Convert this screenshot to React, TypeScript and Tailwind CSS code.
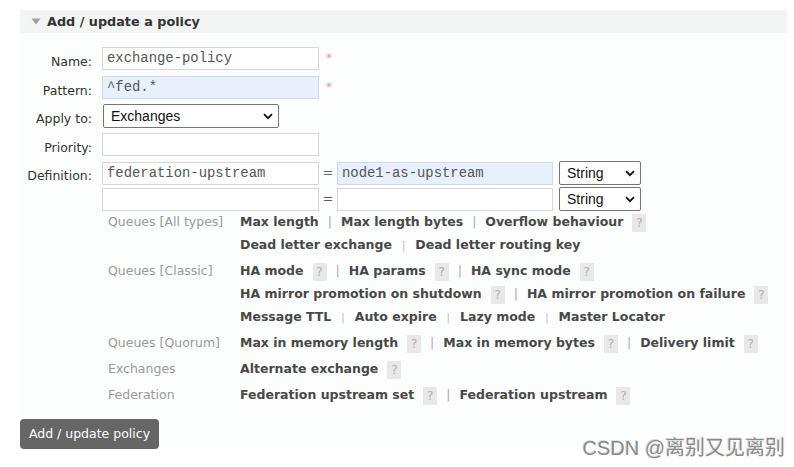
import React from "react";

const L = ({ t }: { t: string }) => (
  <span className="font-bold text-[#484848] whitespace-nowrap">{t}</span>
);
const Q = () => (
  <span className="inline-block w-[14px] h-[18px] bg-[#e8e8e8] text-[#b0b0b0] text-center leading-[18px] ml-[9px] align-middle font-normal text-[12px]">
    ?
  </span>
);
const S = ({ small }: { small?: boolean }) => (
  <span className={small ? "mx-[10px] text-[#bbb] text-[10px] align-middle" : "mx-[9px] text-[#aaa] font-normal"}>|</span>
);

const Chevron = () => (
  <svg width="10" height="7" viewBox="0 0 10 7" className="shrink-0">
    <path d="M1 1.2 L5 5.2 L9 1.2" fill="none" stroke="#111" strokeWidth="1.8" />
  </svg>
);

const Select = ({ text, w }: { text: string; w: string }) => (
  <div
    className={`${w} h-[24px] border border-[#767676] rounded-[2px] bg-white flex items-center justify-between pl-[7px] pr-[5px] font-['Liberation_Sans',sans-serif] text-[14px] text-[#111]`}
  >
    <span>{text}</span>
    <Chevron />
  </div>
);

const Input = ({ value, blue, w = "w-[217px]", h = "h-[23px]" }: { value?: string; blue?: boolean; w?: string; h?: string }) => (
  <div
    className={`${w} ${h} border ${blue ? "bg-[#e8f0fe] border-[#cfd9ea]" : "bg-white border-[#d6d6d6]"} flex items-center pl-[4px] font-['Liberation_Mono',monospace] text-[13.9px] text-[#555]`}
  >
    {value}
  </div>
);

const Label = ({ t }: { t: string }) => (
  <div className="w-[72px] text-right pt-[6px] leading-[16px] mr-[10px] text-[#333] text-[12.5px] shrink-0">{t}</div>
);

const Star = () => <span className="ml-[7px] text-[#e89aa0] text-[12px] leading-[16px] self-start mt-[3px]">*</span>;

const Group = ({ label, children }: { label: string; children: React.ReactNode }) => (
  <div className="flex">
    <div className="w-[132px] shrink-0 text-[#9a9a9a] leading-[22px] whitespace-nowrap">{label}</div>
    <div className="flex flex-col">{children}</div>
  </div>
);

const Line = ({ children }: { children: React.ReactNode }) => (
  <div className="h-[23px] flex items-center whitespace-nowrap">{children}</div>
);

export default function App() {
  return (
    <div className="w-[794px] h-[467px] bg-white relative overflow-hidden font-['DejaVu_Sans',sans-serif] text-[12.5px]">
      <div className="pt-[10px] pl-[20px] pr-[7px]">
        <div className="h-[23px] bg-[#f3f5f4] flex items-center pl-[11px] gap-[6px]">
          <svg width="10" height="7" viewBox="0 0 10 7">
            <path d="M0.5 0.5 L9.5 0.5 L5 6.5 Z" fill="#a0a0a0" />
          </svg>
          <span className="font-bold text-[12.8px] text-[#333]">Add / update a policy</span>
        </div>
        <div className="bg-[#fcfdfd] pb-[1px]">
          <div className="pt-[14px] flex items-center">
            <Label t="Name:" />
            <Input value="exchange-policy" />
            <Star />
          </div>
          <div className="mt-[6px] flex items-center">
            <Label t="Pattern:" />
            <Input value="^fed.*" blue />
            <Star />
          </div>
          <div className="mt-[5px] flex items-center">
            <Label t="Apply to:" />
            <div className="ml-[1px]">
              <Select text="Exchanges" w="w-[176px]" />
            </div>
          </div>
          <div className="mt-[5px] flex items-center">
            <Label t="Priority:" />
            <Input h="h-[23px]" />
          </div>
          <div className="mt-[5px] flex items-center">
            <Label t="Definition:" />
            <Input value="federation-upstream" />
            <div className="w-[18px] text-center text-[#666] text-[13px]">=</div>
            <Input value="node1-as-upstream" blue w="w-[216px]" />
            <div className="ml-[6px]">
              <Select text="String" w="w-[82px]" />
            </div>
          </div>
          <div className="mt-[2px] flex items-center">
            <div className="w-[82px] shrink-0" />
            <Input />
            <div className="w-[18px] text-center text-[#666] text-[13px]">=</div>
            <Input w="w-[216px]" />
            <div className="ml-[6px]">
              <Select text="String" w="w-[82px]" />
            </div>
          </div>

          <div className="mt-[0px] pl-[88px] flex flex-col gap-[3px]">
            <Group label="Queues [All types]">
              <Line>
                <L t="Max length" />
                <S />
                <L t="Max length bytes" />
                <S />
                <L t="Overflow behaviour" />
                <Q />
              </Line>
              <Line>
                <L t="Dead letter exchange" />
                <S small />
                <L t="Dead letter routing key" />
              </Line>
            </Group>
            <Group label="Queues [Classic]">
              <Line>
                <L t="HA mode" />
                <Q />
                <S />
                <L t="HA params" />
                <Q />
                <S />
                <L t="HA sync mode" />
                <Q />
              </Line>
              <Line>
                <L t="HA mirror promotion on shutdown" />
                <Q />
                <S />
                <L t="HA mirror promotion on failure" />
                <Q />
              </Line>
              <Line>
                <L t="Message TTL" />
                <S small />
                <L t="Auto expire" />
                <S small />
                <L t="Lazy mode" />
                <S small />
                <L t="Master Locator" />
              </Line>
            </Group>
            <Group label="Queues [Quorum]">
              <Line>
                <L t="Max in memory length" />
                <Q />
                <S />
                <L t="Max in memory bytes" />
                <Q />
                <S />
                <L t="Delivery limit" />
                <Q />
              </Line>
            </Group>
            <Group label="Exchanges">
              <Line>
                <L t="Alternate exchange" />
                <Q />
              </Line>
            </Group>
            <Group label="Federation">
              <Line>
                <L t="Federation upstream set" />
                <Q />
                <S />
                <L t="Federation upstream" />
                <Q />
              </Line>
            </Group>
          </div>

          <div className="mt-[12px]">
            <div className="w-[139px] h-[30px] rounded-[4px] bg-[#666] text-white text-[12.5px] flex items-center justify-center">
              Add / update policy
            </div>
          </div>
        </div>
      </div>
      <div className="absolute right-[9px] bottom-[9px] text-[20px] leading-none text-[#8a8a8a] font-['Liberation_Sans','Noto_Sans_CJK_SC',sans-serif] [text-shadow:1px_1px_0_#fff,-1px_-1px_0_#ddd]">
        CSDN @离别又见离别
      </div>
    </div>
  );
}
